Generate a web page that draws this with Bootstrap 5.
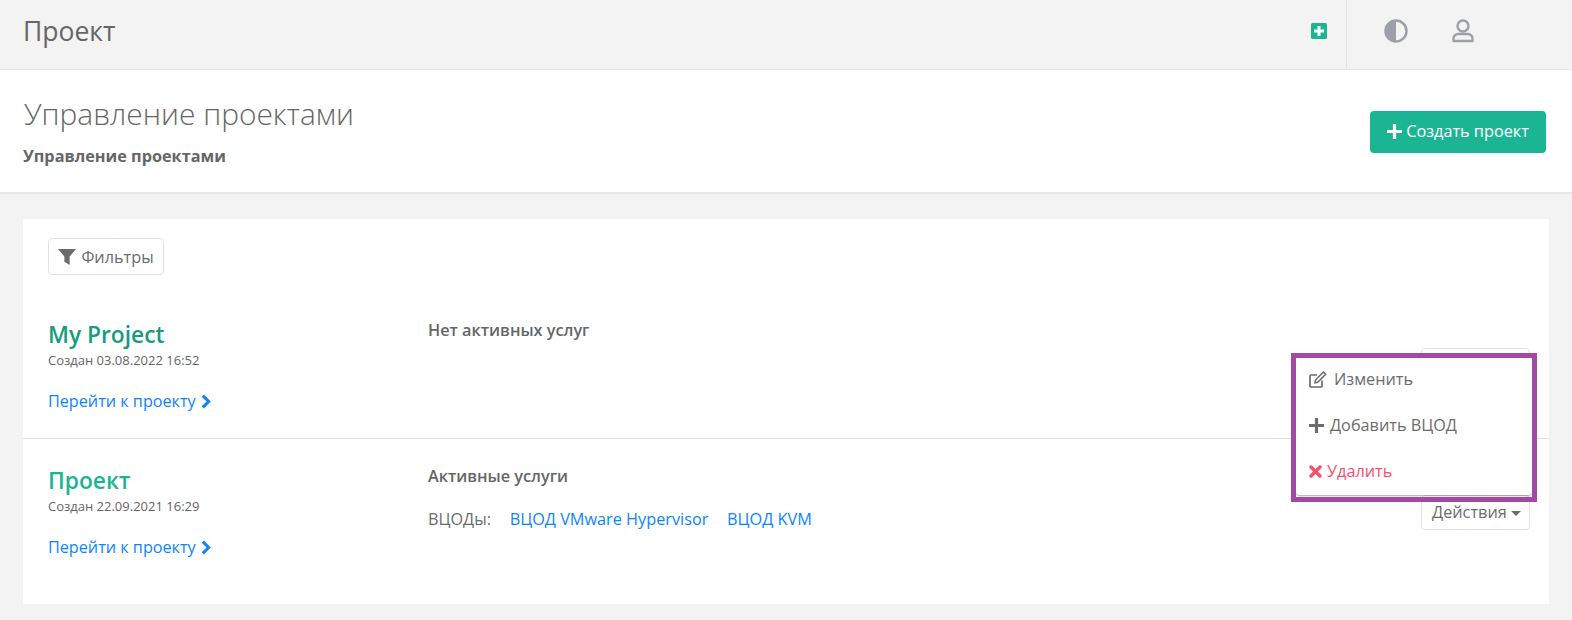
<!DOCTYPE html>
<html lang="ru"><head><meta charset="utf-8"><title>Проект</title>
<link href="https://cdn.jsdelivr.net/npm/bootstrap@5.3.0/dist/css/bootstrap.min.css" rel="stylesheet">
<style>
html,body{height:620px;overflow:hidden}
body{background:#f3f3f3;font-family:"Open Sans","Noto Sans",sans-serif;font-size:16.25px;color:#6c6c6c;position:relative}
.top-bar{height:70px;border-bottom:1px solid #e4e4e4;background:#f3f3f3}
.top-title{font-size:26.5px;margin-left:23px;margin-bottom:7px;color:#666;line-height:32px}
.top-actions{width:226px;border-left:1px solid #e4e4e4;height:69px;padding-left:37px;padding-bottom:7px;gap:44px}
.add-wrap{margin-right:19px;margin-bottom:7px}
.page-head{height:124px;background:#fff;border-bottom:2px solid #e8e8e8;padding:0 26px 0 23px}
.head-text{margin-bottom:2px}
.page-title{font-size:29.9px;font-weight:300;color:#666;line-height:40px;margin:0 0 12px 1px}
.page-sub{font-size:16.25px;font-weight:700;color:#666;line-height:20px}
.btn-make{background:#1cb594;color:#fff;border:0;border-radius:4px;height:42px;width:176px;font-size:16.25px;padding:0;margin-top:1px}
.btn-make:hover{background:#1cb594;color:#fff}
.panel-box{background:#fff;margin:25px 23px 0;height:385px;position:relative}
.btn-plainish{background:#fff;border:1px solid #e2e2e2;border-radius:4px;color:#6c6c6c;font-size:16.25px;padding:0;line-height:34px}
.btn-filter{width:116px;height:37px;gap:5px}
.filter-wrap{padding:19px 25px 0}
.proj-row{padding:0 25px;height:146px}
.proj-row.first{height:164px;border-bottom:1px solid #e2e2e2}
.col-a{width:380px;flex:none}
.first .col-a{padding-top:43px}
.next .col-a{padding-top:25px}
.col-b{padding-top:27px}
.first .col-b{padding-top:45px}
.proj-name{font-size:22.75px;font-weight:600;line-height:34px;margin:0 0 -1px}
.name-dark{color:#179c80}.name-light{color:#1cb594}
.proj-date{font-size:13px;line-height:19px;color:#666}
.link-line{margin-top:19px}
.proj-link{color:#0d84ff;text-decoration:none;font-size:16.2px;line-height:22px;gap:5px}
.svc-head{font-size:16.25px;font-weight:600;color:#666;line-height:20px}
.svc-line{font-size:16.25px;line-height:22px;margin-top:22px}
.svc-line a{color:#0d84ff;text-decoration:none;margin-left:14.5px}
.btn-act{width:109px;height:35px;line-height:33px;padding-left:2px}
.caret-dn{display:inline-block;border-top:5px solid #6c6c6c;border-left:5.5px solid transparent;border-right:5.5px solid transparent;vertical-align:middle}
.act-a{position:absolute;right:19px;top:129px}
.act-b{position:absolute;right:19px;top:276px}
.menu-pop{position:absolute;left:1296px;top:356px;width:236px;height:139px;background:#fff;border-radius:4px;box-shadow:0 1px 2px rgba(0,0,0,.35)}
.menu-row{height:46px;padding-left:13px;font-size:16.25px;color:#6c6c6c;gap:6px}
.menu-row.edit-row{gap:7px}
.menu-row.danger{color:#f4516c;gap:5px}
.frame-mark{position:absolute;left:1291px;top:353px;width:246px;height:149px;border:5px solid #a349a4;pointer-events:none}
</style></head>
<body>
<div class="top-bar d-flex align-items-center justify-content-between">
 <div class="top-title">Проект</div>
 <div class="d-flex align-items-center">
  <div class="add-wrap"><svg width="16" height="16" viewBox="0 0 16 16" class="d-block"><rect width="16" height="16" rx="1.5" fill="#1cb594"/><path d="M6.500 3h3v3.500H13v3H9.500V13h-3V9.500H3v-3h3.500z" fill="#fff"/></svg></div>
  <div class="top-actions d-flex align-items-center">
   <svg width="24" height="24" viewBox="0 0 24 24"><circle cx="12" cy="12" r="10.500" fill="none" stroke="#9da0a6" stroke-width="2.500"/><path d="M12 1.500a10.500 10.500 0 0 0 0 21z" fill="#9da0a6"/></svg>
   <svg width="22" height="24" viewBox="0 0 22 24"><circle cx="11" cy="7" r="5.500" fill="none" stroke="#9da0a6" stroke-width="2.400"/><path d="M1.500 22v-2.500a4.500 4.500 0 0 1 4.500-4.500h10a4.500 4.500 0 0 1 4.500 4.500V22z" fill="none" stroke="#9da0a6" stroke-width="2.400" stroke-linejoin="round"/></svg>
  </div>
 </div>
</div>
<div class="page-head d-flex align-items-center justify-content-between">
 <div class="head-text"><h1 class="page-title">Управление проектами</h1><div class="page-sub">Управление проектами</div></div>
 <button class="btn btn-make d-flex align-items-center justify-content-center gap-1"><svg width="15" height="15" viewBox="0 0 14 14"><path d="M5.500 0h3v5.500H14v3H8.500V14h-3V8.500H0v-3h5.500z" fill="#fff"/></svg>Создать проект</button>
</div>
<div class="panel-box">
 <div class="filter-wrap"><button class="btn btn-plainish btn-filter d-flex align-items-center justify-content-center"><svg width="18" height="18" viewBox="0 0 17 17"><path d="M0 1h17l-6 7v8l-5-3V8z" fill="#6c6c6c"/></svg>Фильтры</button></div>
 <div class="proj-row first d-flex">
  <div class="col-a">
   <h3 class="proj-name name-dark">My Project</h3>
   <div class="proj-date">Создан 03.08.2022 16:52</div>
   <div class="link-line"><a class="proj-link d-inline-flex align-items-center" href="#">Перейти к проекту <svg width="10" height="15" viewBox="0 0 9 14"><path d="M1.500 1.500 7 7l-5.500 5.500" fill="none" stroke="#0d84ff" stroke-width="2.800"/></svg></a></div>
  </div>
  <div class="col-b"><div class="svc-head">Нет активных услуг</div></div>
 </div>
 <div class="proj-row next d-flex">
  <div class="col-a">
   <h3 class="proj-name name-light">Проект</h3>
   <div class="proj-date">Создан 22.09.2021 16:29</div>
   <div class="link-line"><a class="proj-link d-inline-flex align-items-center" href="#">Перейти к проекту <svg width="10" height="15" viewBox="0 0 9 14"><path d="M1.500 1.500 7 7l-5.500 5.500" fill="none" stroke="#0d84ff" stroke-width="2.800"/></svg></a></div>
  </div>
  <div class="col-b"><div class="svc-head">Активные услуги</div>
   <div class="svc-line">ВЦОДы: <a href="#">ВЦОД VMware Hypervisor</a> <a href="#">ВЦОД KVM</a></div></div>
 </div>
 <button class="btn btn-plainish btn-act act-a">Действия <span class="caret-dn"></span></button>
 <button class="btn btn-plainish btn-act act-b">Действия <span class="caret-dn"></span></button>
</div>
<div class="menu-pop">
 <div class="menu-row edit-row d-flex align-items-center"><svg width="18" height="17" viewBox="0 0 18 17"><path d="M13 9.500V15a1 1 0 0 1-1 1H2a1 1 0 0 1-1-1V5a1 1 0 0 1 1-1h6" fill="none" stroke="#6c6c6c" stroke-width="1.700"/><path d="M6.500 9 14.500 1l2.200 2.200-8 8-2.700.5z" fill="none" stroke="#6c6c6c" stroke-width="1.500"/></svg>Изменить</div>
 <div class="menu-row d-flex align-items-center"><svg width="15" height="15" viewBox="0 0 14 14"><path d="M5.500 0h3v5.500H14v3H8.500V14h-3V8.500H0v-3h5.500z" fill="#6c6c6c"/></svg>Добавить ВЦОД</div>
 <div class="menu-row danger d-flex align-items-center"><svg width="13" height="13" viewBox="0 0 13 13"><path d="M2 2l9 9M11 2l-9 9" stroke="#f4516c" stroke-width="3.400" stroke-linecap="round"/></svg>Удалить</div>
</div>
<div class="frame-mark"></div>
<script src="https://cdn.jsdelivr.net/npm/bootstrap@5.3.0/dist/js/bootstrap.bundle.min.js"></script>
</body></html>
